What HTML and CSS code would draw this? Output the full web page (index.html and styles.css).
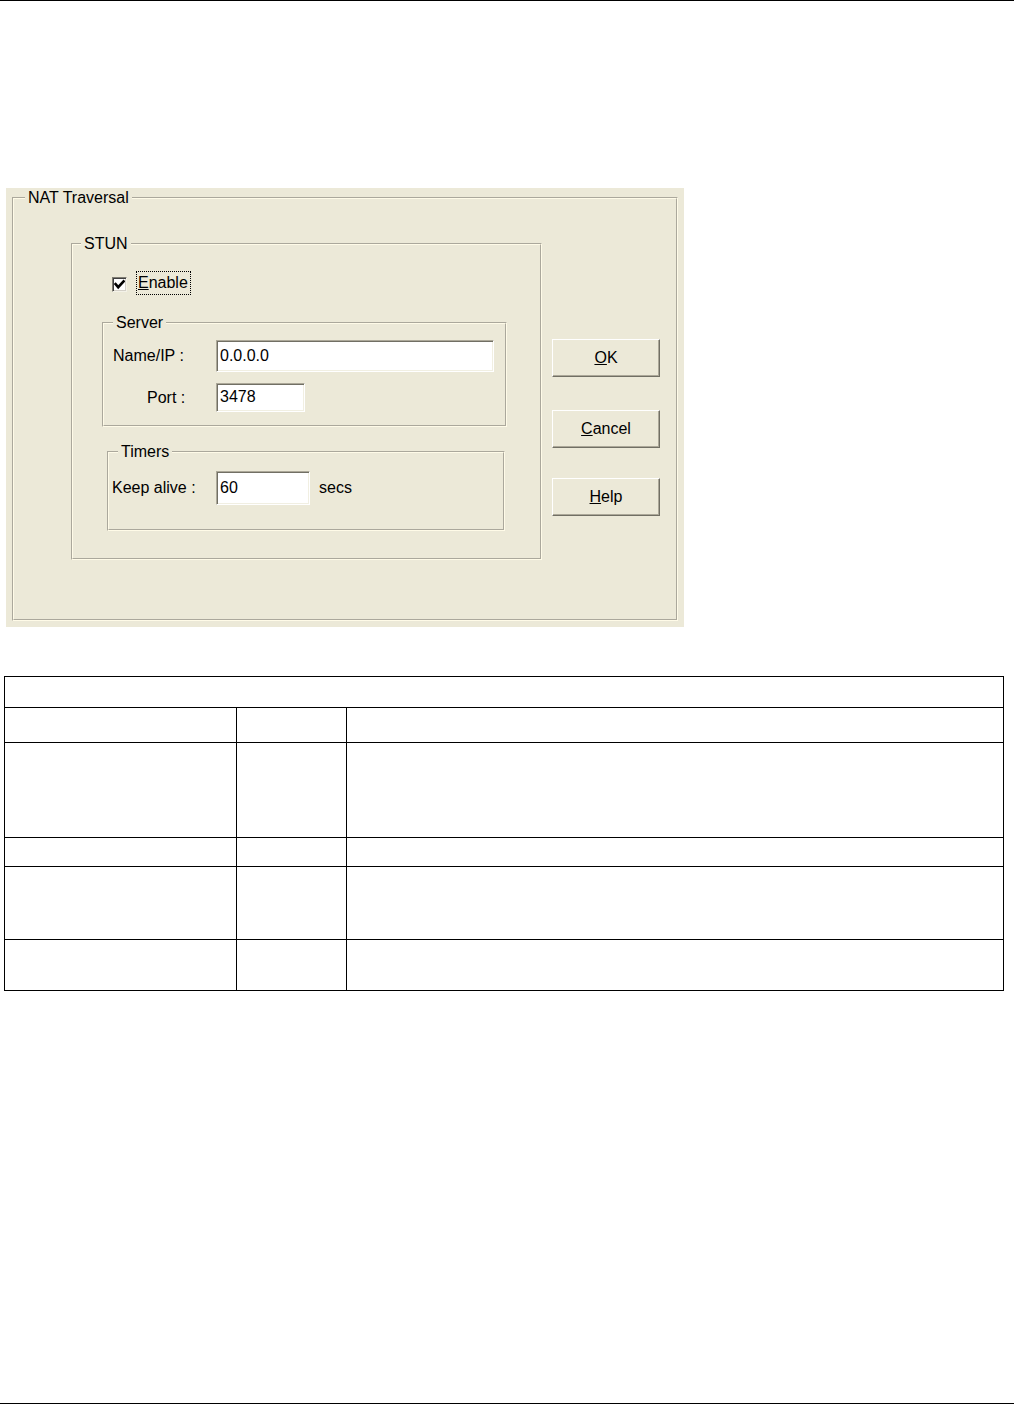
FILE: index.html
```html
<!DOCTYPE html>
<html lang="en">
<head>
<meta charset="utf-8">
<title>NAT Traversal</title>
<link rel="stylesheet" href="styles.css">
</head>
<body>
<div class="page">
  <div class="rule"></div>
  <div class="dialog">
    <fieldset class="group group-nat">
      <legend class="legend legend-nat">NAT Traversal</legend>
      <div class="nat-body">
        <fieldset class="group group-stun">
          <legend class="legend legend-stun">STUN</legend>
          <div class="check-row">
            <span class="checkbox"><svg class="check-mark" viewBox="0 0 11 11" width="11" height="11"><polyline points="1.6,5.2 4.2,8.2 9.6,2.4" fill="none" stroke="#000" stroke-width="2.6" stroke-linecap="square"/></svg></span>
            <span class="check-label"><u>E</u>nable</span>
          </div>
          <fieldset class="group group-server">
            <legend class="legend legend-server">Server</legend>
            <div class="field-row row-name">
              <label class="field-label label-name" for="name-ip">Name/IP :</label>
              <input class="textbox box-name" id="name-ip" type="text" value="0.0.0.0">
            </div>
            <div class="field-row row-port">
              <label class="field-label label-port" for="port">Port :</label>
              <input class="textbox box-port" id="port" type="text" value="3478">
            </div>
          </fieldset>
          <fieldset class="group group-timers">
            <legend class="legend legend-timers">Timers</legend>
            <div class="field-row row-keep">
              <label class="field-label label-keep" for="keep">Keep alive :</label>
              <input class="textbox box-keep" id="keep" type="text" value="60">
              <span class="unit">secs</span>
            </div>
          </fieldset>
        </fieldset>
        <div class="buttons">
          <button class="btn" type="button"><u>O</u>K</button>
          <button class="btn btn-cancel" type="button"><u>C</u>ancel</button>
          <button class="btn btn-help" type="button"><u>H</u>elp</button>
        </div>
      </div>
    </fieldset>
  </div>
  <table class="grid">
    <colgroup>
      <col class="c1">
      <col class="c2">
      <col class="c3">
    </colgroup>
    <tbody>
      <tr class="r1"><td colspan="3"></td></tr>
      <tr class="r2"><td></td><td></td><td></td></tr>
      <tr class="r3"><td></td><td></td><td></td></tr>
      <tr class="r4"><td></td><td></td><td></td></tr>
      <tr class="r5"><td></td><td></td><td></td></tr>
      <tr class="r6"><td></td><td></td><td></td></tr>
    </tbody>
  </table>
  <div class="rule rule-bottom"></div>
</div>
</body>
</html>
```

FILE: styles.css
```css
* { box-sizing: border-box; }

html, body {
  margin: 0;
  padding: 0;
  background: #fff;
}

body {
  font-family: "Liberation Sans", Arial, sans-serif;
  font-size: 16px;
  color: #000;
}

.page {
  display: flex;
  flex-direction: column;
  height: 1404px;
}

.rule {
  flex: none;
  height: 1px;
  background: #000;
}

.rule-bottom {
  margin-top: auto;
}

/* ---------- dialog ---------- */
.dialog {
  flex: none;
  margin: 187px 0 0 6px;
  width: 678px;
  height: 439px;
  padding-top: 1px;
  background: #ECE9D8;
}

.group {
  margin: 0;
  padding: 0;
  min-width: 0;
  border: 2px groove #FFFBE8;
}

.legend {
  padding: 0 3px;
  line-height: 18px;
  font-size: 16px;
}

.group-nat {
  margin-left: 6px;
  width: 666px;
  height: 432px;
}
.legend-nat { margin-left: 11px; }

.nat-body {
  display: flex;
  align-items: flex-start;
}

.group-stun {
  flex: none;
  margin: 28px 0 0 57px;
  width: 471px;
  height: 325px;
}
.legend-stun { margin-left: 8px; }

.check-row {
  display: flex;
  align-items: flex-start;
  height: 24px;
  margin: 18px 0 0 39px;
}

.checkbox {
  flex: none;
  display: flex;
  align-items: center;
  justify-content: center;
  width: 15px;
  height: 15px;
  margin-top: 6px;
  background: #fff;
  border: 1px solid;
  border-color: #7F7D73 #F4F2E8 #F4F2E8 #7F7D73;
  box-shadow: inset 1px 1px 0 #404040, inset -1px -1px 0 #D4D0C8;
}

.check-mark { display: block; }

.check-label {
  margin-left: 9px;
  height: 24px;
  line-height: 22px;
  padding: 0 2px 0 1px;
  border: 1px dotted #000;
}

.group-server {
  margin: 19px 0 0 29px;
  width: 405px;
  height: 113px;
}
.legend-server { margin-left: 9px; }

.group-timers {
  margin: 16px 0 0 34px;
  width: 398px;
  height: 88px;
}
.legend-timers { margin-left: 9px; }

.field-row {
  display: flex;
  align-items: center;
}
.row-name { margin-top: 8px; }
.row-port { margin-top: 11px; }
.row-keep { margin-top: 10px; }

.field-label {
  flex: none;
  width: 112px;
}
.label-name { padding-left: 9px; }
.label-port { padding-left: 43px; }
.label-keep { width: 107px; padding-left: 3px; }

.textbox {
  flex: none;
  margin: 0;
  padding: 0 2px 1px 3px;
  font: inherit;
  color: #000;
  background: #fff;
  border: 1px solid;
  border-color: #ACA899 #fff #fff #ACA899;
  box-shadow: inset 1px 1px 0 #716F64, inset -1px -1px 0 #F1EFE2;
  outline: none;
}
.box-name { width: 278px; height: 32px; }
.box-port { width: 89px; height: 29px; }
.box-keep { width: 94px; height: 34px; }

.unit { margin-left: 9px; }

.buttons {
  flex: none;
  display: flex;
  flex-direction: column;
  margin-left: 10px;
  padding-top: 132px;
}

.btn {
  width: 108px;
  height: 38px;
  margin: 0;
  padding: 0;
  font: inherit;
  color: #000;
  background: #ECE9D8;
  border: 1px solid;
  border-color: #fff #716F64 #716F64 #fff;
  box-shadow: inset -1px -1px 0 #ACA899;
}
.btn-cancel { margin-top: 33px; }
.btn-help { margin-top: 30px; }

/* ---------- table ---------- */
.grid {
  flex: none;
  margin: 49px 0 0 4px;
  width: 999px;
  table-layout: fixed;
  border-collapse: collapse;
}

.c1 { width: 232px; }
.c2 { width: 110px; }
.c3 { width: 657px; }

.grid td {
  padding: 0;
  border: 1px solid #000;
}

.r1 td { height: 31px; }
.r2 td { height: 35px; }
.r3 td { height: 95px; }
.r4 td { height: 29px; }
.r5 td { height: 73px; }
.r6 td { height: 51px; }
```
